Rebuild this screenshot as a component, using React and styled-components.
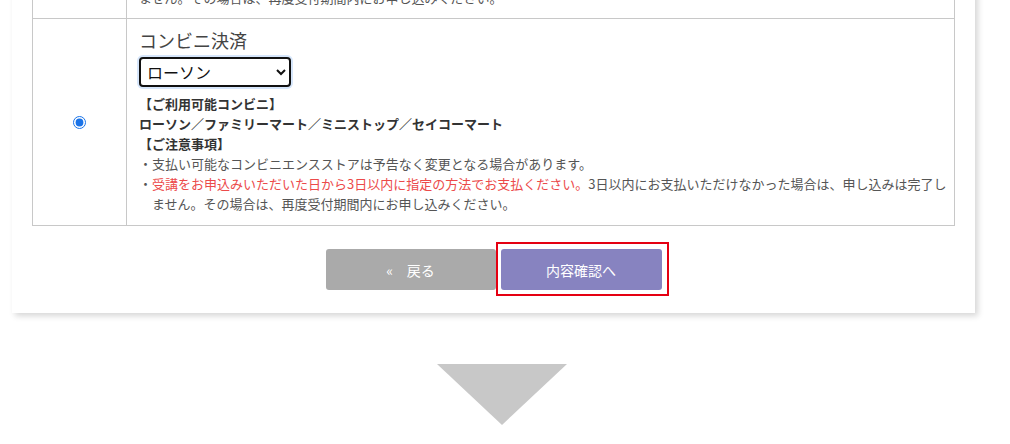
import React, { useState } from 'react';
import styled, { createGlobalStyle } from 'styled-components';

const GlobalStyle = createGlobalStyle`
  html, body { margin: 0; padding: 0; background: #fff; }
  body {
    font-family: "Noto Sans CJK JP", "Noto Sans", sans-serif;
    color: #333;
    overflow: hidden;
  }
`;

const Page = styled.div`
  width: 1010px;
  margin-top: -13px;
`;

const Card = styled.div`
  margin-left: 12px;
  width: 963px;
  background: #fff;
  box-shadow: 3px 3px 6px rgba(0, 0, 0, 0.16);
  padding: 0 20px 23px;
  box-sizing: border-box;
`;

const Table = styled.table`
  width: 100%;
  border-collapse: collapse;
  border: 1px solid #c8c8c8;
`;

const Row = styled.tr`
  border-top: 1px solid #c8c8c8;
`;

const RadioCell = styled.td`
  width: 93px;
  border-right: 1px solid #c8c8c8;
  text-align: center;
  vertical-align: middle;
  padding: 0;
`;

const BodyCell = styled.td`
  padding: ${p => (p.$tail ? '0 2px 10px 12px' : '8px 2px 11px 12px')};
  vertical-align: top;
`;

const Radio = styled.input`
  margin: 0;
  width: 13px;
  height: 13px;
  accent-color: #1a73e8;
`;

const Title = styled.div`
  font-size: 18px;
  line-height: 26px;
  color: #444;
`;

const Select = styled.select`
  display: block;
  margin: 4px 0 7px;
  width: 152px;
  height: 30px;
  font-family: "Noto Sans CJK JP", sans-serif;
  font-size: 16px;
  color: #111;
  border: 2px solid #111;
  border-radius: 4px;
  background: #fff;
  padding: 0 2px;
  box-shadow: 0 0 0 2px #d6e6fb;
  outline: none;
`;

const Note = styled.p`
  margin: 0;
  font-size: 13px;
  line-height: 20px;
  font-weight: ${p => (p.$bold ? 700 : 400)};
  color: ${p => (p.$bold ? '#333' : '#555')};
`;

const Bullet = styled(Note)`
  padding-left: 1em;
  text-indent: -1em;
`;

const Red = styled.span`
  color: #ec4a4a;
`;

const Buttons = styled.div`
  display: flex;
  justify-content: center;
  gap: 5px;
  margin-top: 23px;
`;

const Button = styled.button`
  width: ${p => p.$w}px;
  height: 41px;
  border: none;
  border-radius: 3px;
  background: ${p => p.$bg};
  color: #fff;
  font-family: "Noto Sans CJK JP", sans-serif;
  font-size: 14px;
  cursor: pointer;
`;

const Marker = styled.span`
  display: flex;
  margin: -7px -7px -6px -5px;
  padding: 5px 5px 4px 3px;
  border: 2px solid #e50012;
`;

const ArrowWrap = styled.div`
  display: flex;
  justify-content: center;
  padding-right: 6px;
  margin-top: 51px;
`;

const Arrow = () => (
  <svg width="130" height="61" viewBox="0 0 130 61">
    <polygon points="0,0 130,0 65,61" fill="#c8c8c8" />
  </svg>
);

export default function App() {
  const [store, setStore] = useState('lawson');
  return (
    <Page>
      <GlobalStyle />
      <Card>
        <Table>
          <tbody>
            <tr>
              <RadioCell />
              <BodyCell $tail>
                <Bullet>ません。その場合は、再度受付期間内にお申し込みください。</Bullet>
              </BodyCell>
            </tr>
            <Row>
              <RadioCell>
                <Radio type="radio" name="pay" defaultChecked />
              </RadioCell>
              <BodyCell>
                <Title>コンビニ決済</Title>
                <Select value={store} onChange={e => setStore(e.target.value)}>
                  <option value="lawson">ローソン</option>
                  <option value="family">ファミリーマート</option>
                  <option value="ministop">ミニストップ</option>
                  <option value="seico">セイコーマート</option>
                </Select>
                <Note $bold>【ご利用可能コンビニ】</Note>
                <Note $bold>ローソン／ファミリーマート／ミニストップ／セイコーマート</Note>
                <Note $bold>【ご注意事項】</Note>
                <Bullet>・支払い可能なコンビニエンスストアは予告なく変更となる場合があります。</Bullet>
                <Bullet>
                  ・<Red>受講をお申込みいただいた日から3日以内に指定の方法でお支払ください。</Red>3日以内にお支払いただけなかった場合は、申し込みは完了し<br />ません。その場合は、再度受付期間内にお申し込みください。
                </Bullet>
              </BodyCell>
            </Row>
          </tbody>
        </Table>
        <Buttons>
          <Button $w={170} $bg="#aaaaaa">«　戻る</Button>
          <Marker>
            <Button $w={161} $bg="#8783c0">内容確認へ</Button>
          </Marker>
        </Buttons>
      </Card>
      <ArrowWrap>
        <Arrow />
      </ArrowWrap>
    </Page>
  );
}
